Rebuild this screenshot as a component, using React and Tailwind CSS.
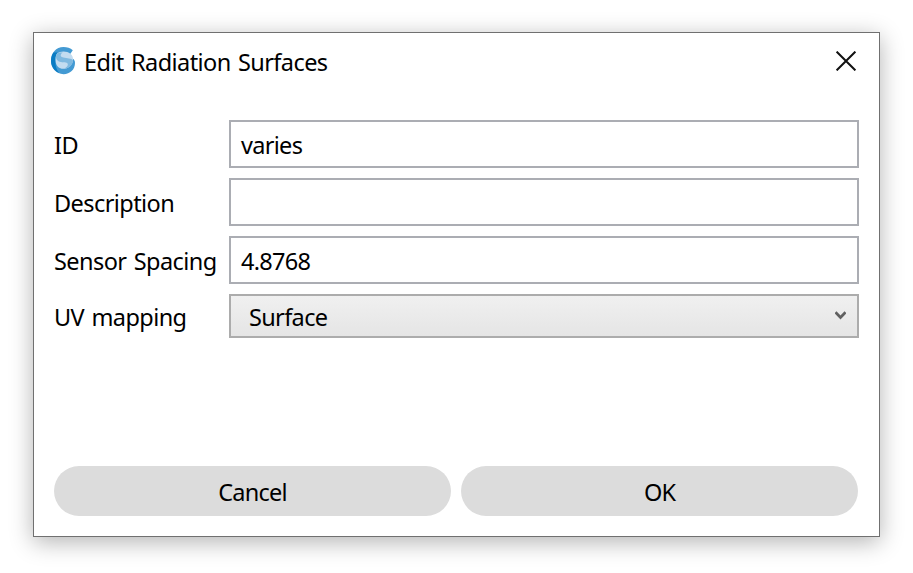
function AppIcon() {
  return (
    <svg width="26" height="28" viewBox="2 3 26 28" fill="none" className="-mt-[2px] shrink-0">
      <path d="M15.5 3C19 3 22.5 4 24.8 6.2L22.4 9.8L20 12L24.4 14.6C26.4 15.6 27 17.2 27 19C27 25.5 22 30.2 15.6 30.2C8 30.2 3 24 3 16.6C3 9 8 3 15.5 3Z" fill="#439ad3" />
      <path d="M5.6 8.4C2.6 12 2.2 19 4.8 23.6C6.4 26.4 8.6 28 11 28.8C8.6 26 7.6 22.6 7.4 18.6C7.2 14 7.4 11 9.4 8.4Z" fill="#0a7cc4" />
      <path d="M9 9.8C12 6.8 19 6.8 22.4 9.8C24.4 11.4 25.2 13.4 25 16C24.6 21.6 19.4 25 15.2 24.8C11 24.6 8.4 21.8 7.8 18.4C7.3 15 7.5 12 9 9.8Z" fill="#c3dcf0" />
      <path d="M8.4 10.8C7.4 13.6 8.4 16.6 11.6 17.8C15 19 19 17.8 19.8 20C20.2 21.6 18.6 23.2 16.4 24.7C21.6 24 24.8 20.4 25 16.4C23.4 14.2 19 14.4 15.4 13.6C12.8 13 12.2 11.4 13 10.2C13.4 9.4 14.2 8.8 15 8.6C12.4 8.4 9.4 8.6 8.4 10.8Z" fill="#7fb9e0" />
    </svg>
  );
}

function Field({ label, value }) {
  return (
    <div className="flex h-12 items-center">
      <label className="w-[175px] shrink-0 pt-[2px] whitespace-nowrap">{label}</label>
      <div className="flex h-full flex-1 items-center border-2 border-[#abadb3] bg-white pt-[2px] pl-[10px]">
        <span className="tracking-[-0.7px]">{value}</span>
      </div>
    </div>
  );
}

export default function App() {
  return (
    <div className="h-[573px] w-[913px] overflow-hidden bg-white pt-8 pl-[33px] font-['Noto_Sans','Open_Sans',sans-serif] text-[23.5px] leading-8 tracking-[-0.57px] text-black [word-spacing:1.7px]">
      <div className="flex h-[505px] w-[847px] flex-col border border-[#707070] bg-white px-5 shadow-[0_5px_22px_rgba(0,0,0,0.3)]">
        <header className="flex h-[58px] items-center justify-between pr-[3px]">
          <div className="-ml-[4px] flex items-center">
            <AppIcon />
            <h1 className="ml-[8px] whitespace-nowrap">Edit Radiation Surfaces</h1>
          </div>
          <svg width="20" height="20" viewBox="0 0 20 20" fill="none" stroke="#111" strokeWidth="2" className="-mt-[2px]">
            <path d="M.6.6 19.4 19.4M19.4.6.6 19.4" />
          </svg>
        </header>
        <main className="mt-[29px] flex flex-col gap-[10px]">
          <Field label="ID" value="varies" />
          <Field label="Description" value="" />
          <Field label="Sensor Spacing" value="4.8768" />
          <div className="flex h-11 items-center">
            <label className="w-[175px] shrink-0 pt-[2px]">UV mapping</label>
            <div className="flex h-full flex-1 items-center justify-between border-2 border-[#acacac] bg-linear-to-b from-[#f0f0f0] to-[#e5e5e5] pr-[11px] pl-[18px]">
              <span className="pt-[2px] tracking-[-0.65px]">Surface</span>
              <svg width="11" height="9" viewBox="0 0 11 9" fill="none" stroke="#606060" strokeWidth="2.7" className="-mt-[2px]">
                <path d="M.5 1.2 5.5 6.5 10.5 1.2" />
              </svg>
            </div>
          </div>
        </main>
        <footer className="mt-auto mr-px mb-5 flex gap-[10px]">
          <button className="h-[50px] flex-1 rounded-full bg-[#dcdcdc] pt-[2px] tracking-[-0.8px]">Cancel</button>
          <button className="h-[50px] flex-1 rounded-full bg-[#dcdcdc] pt-[2px] tracking-[-1px]">OK</button>
        </footer>
      </div>
    </div>
  );
}
